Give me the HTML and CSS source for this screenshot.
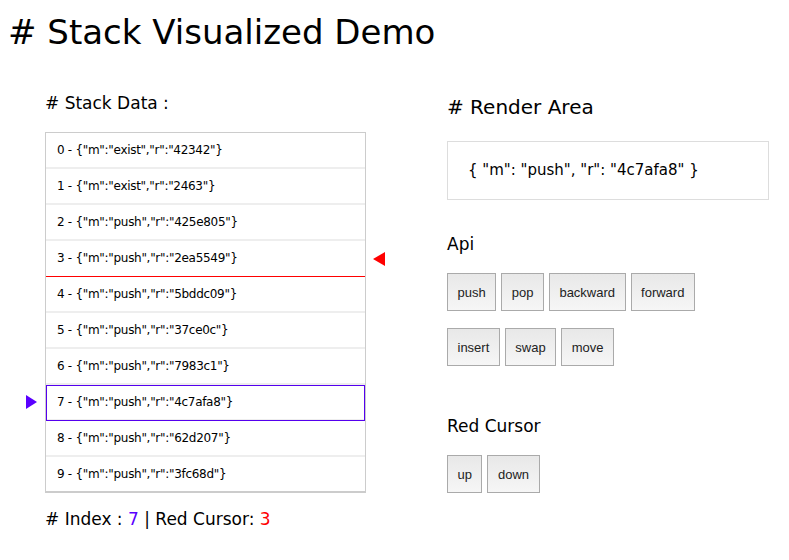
FILE: index.html
```html
<!DOCTYPE html>
<html>
<head>
<meta charset="utf-8">
<link rel="stylesheet" href="styles.css">
</head>
<body>
<h1 class="title"># Stack Visualized Demo</h1>
<div class="main">
  <div class="left">
    <h3 class="sub"># Stack Data :</h3>
    <div class="stack">
      <div class="row">0 - {"m":"exist","r":"42342"}</div>
      <div class="row">1 - {"m":"exist","r":"2463"}</div>
      <div class="row">2 - {"m":"push","r":"425e805"}</div>
      <div class="row red">3 - {"m":"push","r":"2ea5549"}<span class="tri-red"></span></div>
      <div class="row">4 - {"m":"push","r":"5bddc09"}</div>
      <div class="row">5 - {"m":"push","r":"37ce0c"}</div>
      <div class="row">6 - {"m":"push","r":"7983c1"}</div>
      <div class="row active">7 - {"m":"push","r":"4c7afa8"}<span class="tri-purple"></span></div>
      <div class="row">8 - {"m":"push","r":"62d207"}</div>
      <div class="row">9 - {"m":"push","r":"3fc68d"}</div>
    </div>
    <p class="info"># Index : <span class="purple">7</span> | Red Cursor: <span class="redtxt">3</span></p>
  </div>
  <div class="right">
    <h3 class="sub2"># Render Area</h3>
    <div class="render">{ "m": "push", "r": "4c7afa8" }</div>
    <h4 class="sec">Api</h4>
    <div class="btns">
      <button>push</button><button>pop</button><button>backward</button><button>forward</button>
    </div>
    <div class="btns">
      <button>insert</button><button>swap</button><button>move</button>
    </div>
    <h4 class="sec sec-cursor">Red Cursor</h4>
    <div class="btns">
      <button>up</button><button>down</button>
    </div>
  </div>
</div>
</body>
</html>
```
FILE: styles.css
```css
body {
  margin: 8px;
  font-family: "DejaVu Sans", sans-serif;
  color: #000;
  background: #fff;
}
.title {
  font-weight: normal;
  font-size: 34px;
  margin: 6px 0 0 0;
  line-height: 36px;
}
.main {
  display: flex;
  padding-left: 37px;
}
.left {
  width: 321px;
}
.right {
  margin-left: 81px;
  width: 322px;
}
.sub {
  font-weight: normal;
  font-size: 17px;
  margin: 41px 0 0 0;
  line-height: 24px;
}
.stack {
  margin-top: 17px;
  border: 1px solid #ccc;
  border-bottom-width: 2px;
}
.row {
  position: relative;
  height: 34px;
  line-height: 34px;
  padding-left: 11px;
  font-size: 12px;
  border-bottom: 2px solid #eee;
  letter-spacing: -0.3px;
}
.row:last-child {
  border-bottom: 0;
}
.row.red {
  border-bottom: 1px solid #ff0000;
  height: 35px;
}
.row.active {
  outline: 1px solid #5500ee;
  outline-offset: -1px;
}
.tri-red {
  position: absolute;
  right: -20px;
  top: 11px;
  width: 0;
  height: 0;
  border-top: 7px solid transparent;
  border-bottom: 7px solid transparent;
  border-right: 12px solid #f00;
}
.tri-purple {
  position: absolute;
  left: -20px;
  top: 10px;
  width: 0;
  height: 0;
  border-top: 7px solid transparent;
  border-bottom: 7px solid transparent;
  border-left: 11px solid #5a00ff;
}
.info {
  font-size: 17px;
  margin: 16px 0 0 0;
  line-height: 20px;
}
.purple { color: #5a00ff; }
.redtxt { color: #f00; }
.sub2 {
  font-weight: normal;
  font-size: 20px;
  margin: 44px 0 0 0;
  line-height: 26px;
}
.render {
  margin-top: 21px;
  border: 1px solid #ddd;
  height: 57px;
  line-height: 57px;
  padding-left: 20px;
  font-size: 15px;
}
.sec {
  font-weight: normal;
  font-size: 17px;
  margin: 32px 0 0 0;
  line-height: 24px;
}
.sec-cursor {
  margin-top: 48px;
}
.btns {
  display: flex;
  gap: 5px;
  margin-top: 17px;
}
button {
  font-family: "Liberation Sans", Arial, sans-serif;
  font-size: 13px;
  color: #222;
  height: 38px;
  padding: 0 9.5px;
  border: 1px solid #aaa;
  border-radius: 0;
  background: linear-gradient(#e8e8e8, #f6f6f6);
}
```
